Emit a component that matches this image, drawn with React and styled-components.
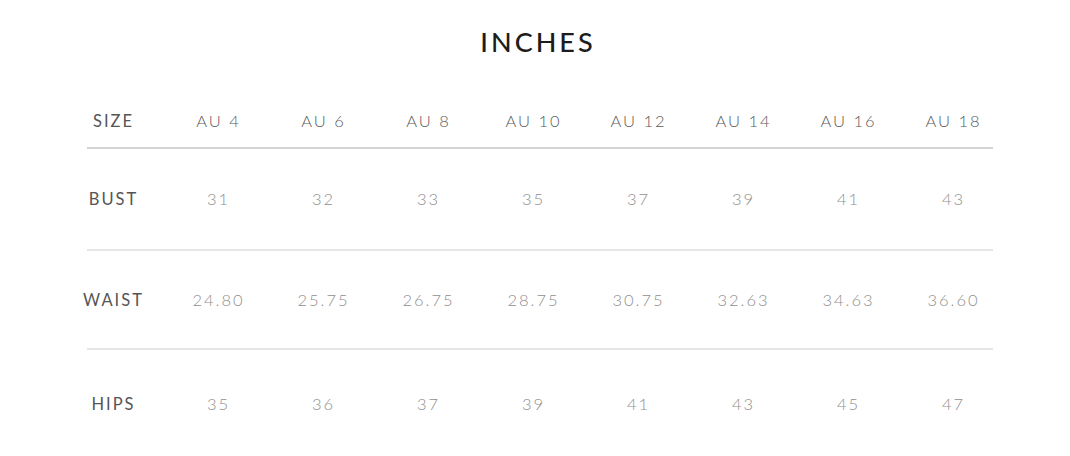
import React from 'react'
import styled, { createGlobalStyle } from 'styled-components'

const GlobalStyle = createGlobalStyle`
  html, body {
    margin: 0;
    padding: 0;
    background: #ffffff;
  }
  body {
    font-family: Lato, "Open Sans", sans-serif;
  }
`

const Page = styled.div`
  width: 1070px;
  height: 456px;
  overflow: hidden;
  display: flex;
  flex-direction: column;
  align-items: center;
`

const Title = styled.h2`
  margin: 24px 0 0 6px;
  height: 36px;
  line-height: 36px;
  font-size: 27px;
  font-weight: 500;
  letter-spacing: 3px;
  color: #1c1c1c;
`

const Table = styled.div`
  margin: 34px 0 0 -5px;
  width: 945px;
  display: flex;
  flex-direction: column;
`

const Row = styled.div`
  display: grid;
  grid-template-columns: repeat(9, 105px);
  align-items: center;
  height: ${({ height }) => height}px;
`

const Cell = styled.div`
  text-align: center;
  padding-left: 2px;
  font-size: 16.5px;
  letter-spacing: 2px;
  font-weight: ${({ label }) => (label ? 400 : 300)};
  color: ${({ label, head }) => (label ? '#555555' : head ? '#5a5a5a' : '#8f8f8f')};
`

const Divider = styled.div`
  height: 2px;
  margin: 0 12px 0 27px;
  background: ${({ strong }) => (strong ? '#d4d4d4' : '#e6e6e6')};
`

const sizes = ['AU 4', 'AU 6', 'AU 8', 'AU 10', 'AU 12', 'AU 14', 'AU 16', 'AU 18']

const rows = [
  { label: 'BUST', values: ['31', '32', '33', '35', '37', '39', '41', '43'], height: 100 },
  { label: 'WAIST', values: ['24.80', '25.75', '26.75', '28.75', '30.75', '32.63', '34.63', '36.60'], height: 97 },
  { label: 'HIPS', values: ['35', '36', '37', '39', '41', '43', '45', '47'], height: 108 },
]

const App = () => (
  <Page>
    <GlobalStyle />
    <Title>INCHES</Title>
    <Table>
      <Row height={53}>
        <Cell label>SIZE</Cell>
        {sizes.map(s => (
          <Cell head key={s}>
            {s}
          </Cell>
        ))}
      </Row>
      <Divider strong />
      {rows.map((r, i) => (
        <React.Fragment key={r.label}>
          <Row height={r.height}>
            <Cell label>{r.label}</Cell>
            {r.values.map((v, j) => (
              <Cell key={j}>{v}</Cell>
            ))}
          </Row>
          {i < rows.length - 1 && <Divider />}
        </React.Fragment>
      ))}
    </Table>
  </Page>
)

export default App
